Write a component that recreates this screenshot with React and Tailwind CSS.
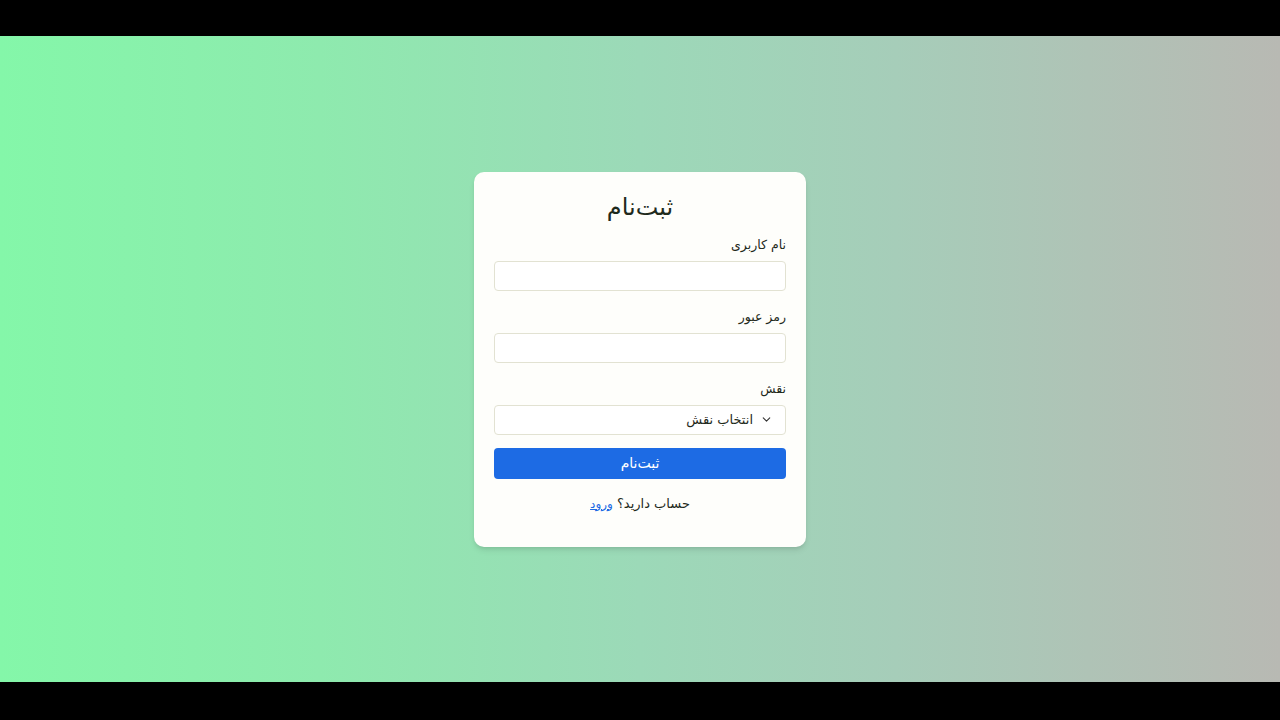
import React from "react";
import { FiChevronDown } from "react-icons/fi";

const Field = ({ label, last, children }) => (
  <div className={last ? "mb-[13px]" : "mb-[15px]"}>
    <label className="block text-[12.5px] leading-[21px] text-[#1f2a1c] mb-[6px]">
      {label}
    </label>
    {children}
  </div>
);

const App = () => {
  return (
    <div
      className="flex flex-col h-screen"
      style={{ fontFamily: '"DejaVu Sans", sans-serif' }}
    >
      <div className="h-[36px] bg-black" />

      <div className="flex-1 flex items-center justify-center bg-[linear-gradient(to_right,#84f7a9_0%,#8eeaae_25%,#9cd9b8_50%,#a6cdb9_70%,#b8b9b3_100%)]">
        <div
          dir="rtl"
          className="w-[332px] bg-[#fefefb] rounded-[10px] shadow-md px-5 pt-5 pb-[32px]"
        >
          <h2 className="text-center text-[24px] leading-[30px] text-[#1f2a1c] mb-3">
            ثبت‌نام
          </h2>

          <Field label="نام کاربری">
            <input
              type="text"
              className="block w-full h-[30px] border border-[#e2e2d2] rounded-[4px] bg-white px-2 outline-none"
            />
          </Field>

          <Field label="رمز عبور">
            <input
              type="password"
              className="block w-full h-[30px] border border-[#e2e2d2] rounded-[4px] bg-white px-2 outline-none"
            />
          </Field>

          <Field label="نقش" last>
            <div className="flex items-center h-[30px] border border-[#e2e2d2] rounded-[4px] bg-white pr-[12px] gap-[7px] text-[13px] text-[#1f2a1c]">
              <FiChevronDown className="text-[13px] text-[#333]" />
              <span>انتخاب نقش</span>
            </div>
          </Field>

          <button className="block w-full h-[31px] rounded-[4px] bg-[#1d6be4] text-white text-[14px]">
            ثبت‌نام
          </button>

          <p className="mt-[14px] text-center text-[13px] leading-[21px] text-[#1f2a1c]">
            حساب دارید؟{" "}
            <a href="#" className="text-[12px] text-[#1d6be4] underline">
              ورود
            </a>
          </p>
        </div>
      </div>

      <div className="h-[38px] bg-black" />
    </div>
  );
};

export default App;
